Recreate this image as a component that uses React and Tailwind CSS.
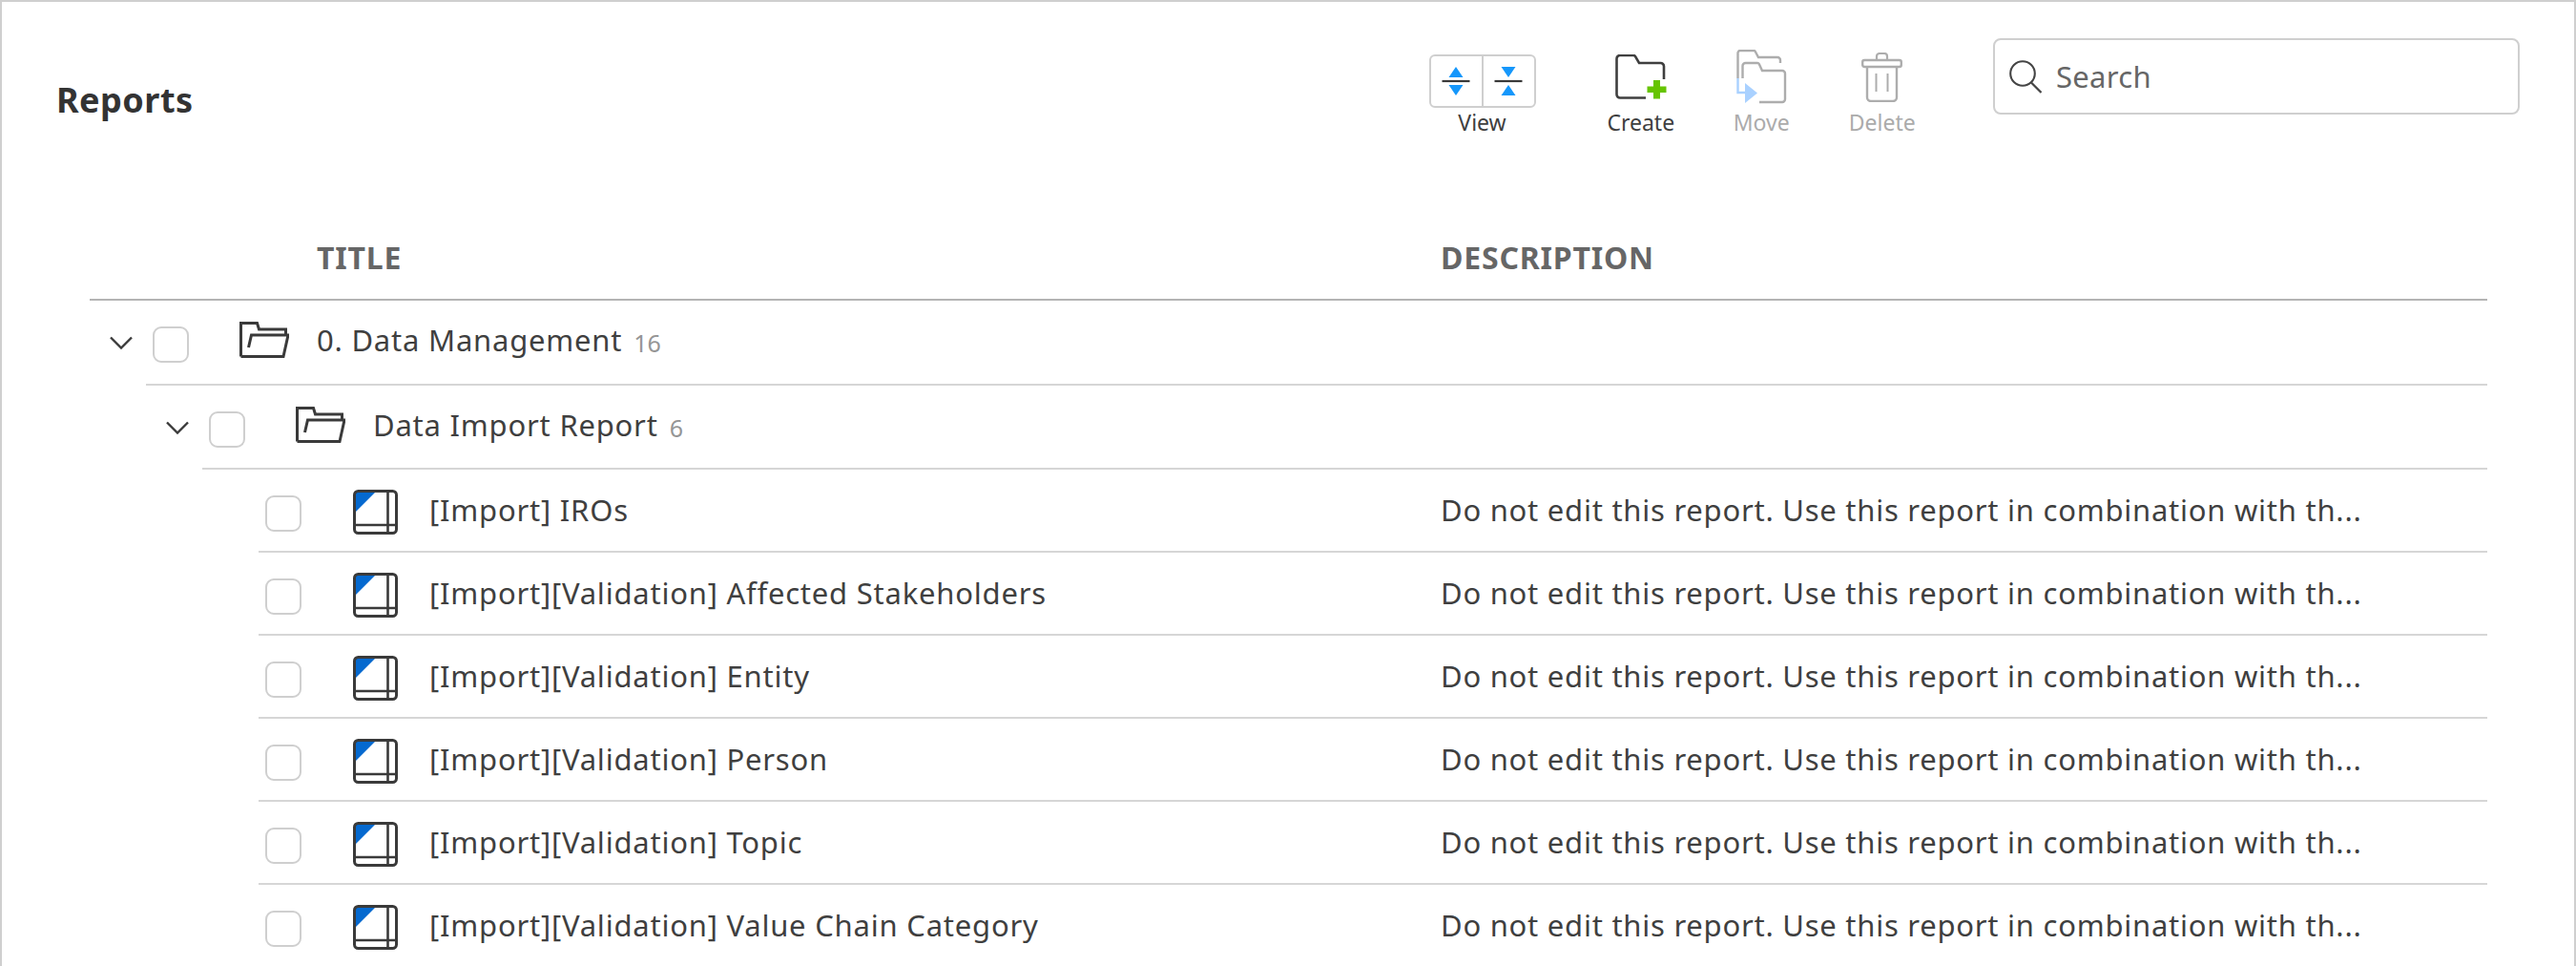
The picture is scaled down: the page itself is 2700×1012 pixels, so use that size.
import React from 'react'

const font = 'font-["Noto_Sans",sans-serif]'

function Chevron() {
  return (
    <svg width="24" height="14" viewBox="0 0 24 14" fill="none" className="mt-[14px]">
      <path d="M1 1.5 12 12.5 23 1.5" stroke="#3a3a3a" strokeWidth="2.4" />
    </svg>
  )
}

function Checkbox() {
  return <div className="mt-[5px] h-[38px] w-[38px] shrink-0 rounded-[9px] border-2 border-[#cfcfcf] bg-white" />
}

function FolderOpen() {
  return (
    <svg width="52" height="38" viewBox="0 0 52 38" fill="none">
      <path
        d="M1.5 36.5V1.5H18.5L20.5 8H48.5V14M1.5 36.5H46L51 14H12.5L9.5 27"
        stroke="#3a3a3a"
        strokeWidth="3"
      />
    </svg>
  )
}

function ReportIcon() {
  return (
    <svg width="47" height="47" viewBox="0 0 47 47" fill="none" className="mt-[-1px] ml-px">
      <path d="M2 2H24L2 24Z" fill="#0569cf" />
      <rect x="1.5" y="1.5" width="44" height="44" rx="4" stroke="#3a3a3a" strokeWidth="3" />
      <path d="M36.5 2V45M2 37H45" stroke="#3a3a3a" strokeWidth="2.6" />
    </svg>
  )
}

function SortIcon({ flip }) {
  return (
    <svg width="30" height="32" viewBox="0 0 30 32" fill="none">
      {flip ? (
        <>
          <path d="M7.5 1H22.5L15 12Z" fill="#1597fb" />
          <path d="M7.5 31H22.5L15 20Z" fill="#1597fb" />
        </>
      ) : (
        <>
          <path d="M7.5 12H22.5L15 1Z" fill="#1597fb" />
          <path d="M7.5 20H22.5L15 31Z" fill="#1597fb" />
        </>
      )}
      <path d="M0.5 16H29.5" stroke="#3a3a3a" strokeWidth="2.2" />
    </svg>
  )
}

function CreateIcon() {
  return (
    <svg width="54" height="47" viewBox="0 0 54 47" fill="none">
      <path
        d="M32 45.5H5a3.5 3.5 0 0 1-3.5-3.5V4.5A3.5 3.5 0 0 1 5 1h14a2.5 2.5 0 0 1 2.2 1.3L25 9h22.5A3.5 3.5 0 0 1 51 12.5V26"
        stroke="#3f3f3f"
        strokeWidth="2.6"
      />
      <path d="M40 27H47V33.5H53.5V40H47V46.5H40V40H33.5V33.5H40Z" fill="#66c400" />
    </svg>
  )
}

function MoveIcon() {
  return (
    <svg width="53" height="57" viewBox="0 0 53 57" fill="none">
      <path
        d="M1.5 30V3.5A2.5 2.5 0 0 1 4 1h14a2 2 0 0 1 1.8 1L23 8h20a3 3 0 0 1 3 3v3"
        stroke="#adadad"
        strokeWidth="2.4"
      />
      <path
        d="M6.5 30V17a3 3 0 0 1 3-3H22a2 2 0 0 1 1.8 1L27 22h21a3 3 0 0 1 3 3v27a3 3 0 0 1-3 3H24"
        stroke="#adadad"
        strokeWidth="2.4"
      />
      <path d="M1.5 30V45H10" stroke="#a9d1ff" strokeWidth="2.4" />
      <path d="M9 35 22 45.5 9 56Z" fill="#a9d1ff" />
    </svg>
  )
}

function DeleteIcon() {
  return (
    <svg width="43" height="52" viewBox="0 0 43 52" fill="none">
      <rect x="1.2" y="8" width="40.6" height="7" rx="2" stroke="#adadad" strokeWidth="2.4" />
      <path d="M16 8V4a3 3 0 0 1 3-3h5a3 3 0 0 1 3 3v4" stroke="#adadad" strokeWidth="2.2" />
      <path d="M6 15V47a4 4 0 0 0 4 4H33a4 4 0 0 0 4-4V15" stroke="#adadad" strokeWidth="2.4" />
      <path d="M15.5 22V41M27.5 22V41" stroke="#adadad" strokeWidth="2" />
    </svg>
  )
}

function SearchIcon() {
  return (
    <svg width="35" height="35" viewBox="0 0 35 35" fill="none">
      <circle cx="14" cy="14" r="12.8" stroke="#454545" strokeWidth="2.1" />
      <path d="M23 23.5 33.5 34" stroke="#454545" strokeWidth="2.3" />
    </svg>
  )
}

function ToolButton({ label, icon, disabled, slot }) {
  return (
    <div className="flex w-[126.5px] flex-col items-center">
      <div className={`flex h-[60px] items-start justify-center ${slot}`}>{icon}</div>
      <span className={`mt-[2px] text-[23px] leading-[30px] ${disabled ? 'text-[#ababab]' : 'text-[#3f3f3f]'}`}>
        {label}
      </span>
    </div>
  )
}

const desc = 'Do not edit this report. Use this report in combination with th...'

const rows = [
  { title: '0. Data Management', count: '16', folder: true, gutter: 'w-[59px]', cell: 'w-[1357px]', height: 'h-[89px]' },
  { title: 'Data Import Report', count: '6', folder: true, gutter: 'w-[118px]', cell: 'w-[1298px]', height: 'h-[88px]' },
  { title: '[Import] IROs', description: desc, gutter: 'w-[177px]', cell: 'w-[1239px]', height: 'h-[87px]' },
  { title: '[Import][Validation] Affected Stakeholders', description: desc, gutter: 'w-[177px]', cell: 'w-[1239px]', height: 'h-[87px]' },
  { title: '[Import][Validation] Entity', description: desc, gutter: 'w-[177px]', cell: 'w-[1239px]', height: 'h-[87px]' },
  { title: '[Import][Validation] Person', description: desc, gutter: 'w-[177px]', cell: 'w-[1239px]', height: 'h-[87px]' },
  { title: '[Import][Validation] Topic', description: desc, gutter: 'w-[177px]', cell: 'w-[1239px]', height: 'h-[87px]' },
  { title: '[Import][Validation] Value Chain Category', description: desc, gutter: 'w-[177px]', cell: 'w-[1239px]', height: 'h-[87px]' },
]

function Row({ row }) {
  return (
    <div className="flex">
      <div className={`flex shrink-0 justify-end pt-[23px] pr-[14px] ${row.gutter}`}>
        {row.folder && <Chevron />}
      </div>
      <div className={`flex flex-1 items-start border-b-2 border-[#d6d6d6] pt-[22px] ${row.height}`}>
        <div className={`flex shrink-0 items-start pl-[7px] ${row.cell}`}>
          <Checkbox />
          <div className="ml-[53px] flex w-[81px] shrink-0 items-start">
            {row.folder ? <FolderOpen /> : <ReportIcon />}
          </div>
          <span className={`text-[31px] leading-[38px] tracking-[0.78px] text-[#3f3f3f] ${row.folder ? '' : 'mt-px'}`}>
            {row.title}
          </span>
          {row.count && <span className="mt-[3px] ml-[12px] text-[25px] leading-[38px] text-[#959595]">{row.count}</span>}
        </div>
        {row.description && (
          <span className="mt-px text-[31px] leading-[38px] tracking-[0.75px] whitespace-nowrap text-[#3f3f3f]">
            {row.description}
          </span>
        )}
      </div>
    </div>
  )
}

export default function App() {
  return (
    <div className={`h-[1012px] w-[2700px] overflow-hidden border-x-2 border-t-2 border-[#cfcfcf] bg-white ${font}`}>
      {/* Title and toolbar */}
      <div className="flex h-[236px] items-start">
        <h1 className="mt-[80px] ml-[57px] text-[36px] leading-[46px] font-bold tracking-[0.5px] text-[#333333]">Reports</h1>
        <div className="ml-auto flex items-start pt-[49px] pr-[57px]">
          <div className="flex w-[112px] flex-col items-center pt-[6px]">
            <div className="flex h-[56px] w-full rounded-[6px] border-2 border-[#cfcfcf]">
              <div className="flex flex-1 items-center justify-center border-r-2 border-[#cfcfcf]">
                <SortIcon />
              </div>
              <div className="flex flex-1 items-center justify-center">
                <SortIcon flip />
              </div>
            </div>
            <span className="text-[23px] leading-[30px] text-[#3f3f3f]">View</span>
          </div>
          <div className="ml-[47px] flex">
            <ToolButton label="Create" icon={<CreateIcon />} slot="pt-[6px]" />
            <ToolButton label="Move" icon={<MoveIcon />} slot="pt-[1px]" disabled />
            <ToolButton label="Delete" icon={<DeleteIcon />} slot="pt-[4px]" disabled />
          </div>
          <div className="mt-[-11px] ml-[53px] flex h-[80px] w-[552px] items-center rounded-[8px] border-2 border-[#cfcfcf] pl-[15px]">
            <SearchIcon />
            <span className="ml-[14px] text-[31px] tracking-[0.3px] text-[#666666]">Search</span>
          </div>
        </div>
      </div>

      {/* Report list */}
      <div className="ml-[92px] w-[2513px]">
        <div className="flex h-[77px] border-b-2 border-[#b4b4b4] pt-[13px] text-[32px] leading-[38px] font-bold tracking-[0.8px] text-[#666666]">
          <div className="w-[1416px] pl-[238px]">TITLE</div>
          <div>DESCRIPTION</div>
        </div>
        {rows.map((row) => (
          <Row key={row.title} row={row} />
        ))}
      </div>
    </div>
  )
}
